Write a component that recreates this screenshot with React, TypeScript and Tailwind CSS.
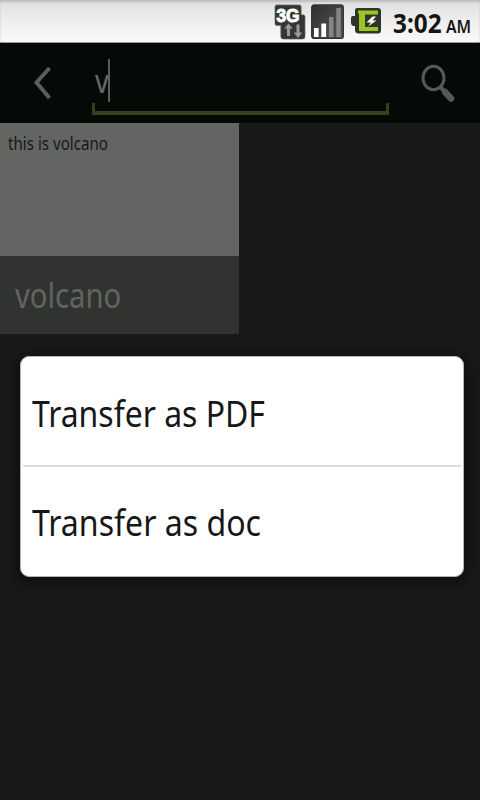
import React from "react";

function NetworkIcon() {
  return (
    <svg width="32" height="36" viewBox="0 0 32 36" className="shrink-0">
      <path d="M3 1H26Q28 1 28 3V12H30Q32 12 32 14V36Q32 39 29 39H10Q7 39 7 36V24H3Q1 24 1 22V3Q1 1 3 1Z" transform="scale(.97 .9)" fill="#353535" stroke="#707070" strokeWidth=".7" />
      <text x="2.5" y="17.5" textLength="23" lengthAdjust="spacingAndGlyphs" fontFamily="'Liberation Sans', sans-serif" fontWeight="700" fontSize="18" fill="#fff" stroke="#fff" strokeWidth="1">3G</text>
      <path d="M14.5 19.5L18.8 24.5H16V32H13V24.5H10.2ZM24 34L19.7 28.5H22.5V20.5H25.5V28.5H28.3Z" fill="#999" />
    </svg>
  );
}

function SignalIcon() {
  return (
    <svg width="33" height="36" viewBox="0 0 33 36" className="shrink-0">
      <defs>
        <linearGradient id="sig" x1="0" y1="0" x2="1" y2="1">
          <stop offset="0" stopColor="#303030" />
          <stop offset="1" stopColor="#555" />
        </linearGradient>
      </defs>
      <rect x=".7" y="1" width="31.6" height="33.4" rx="2.5" fill="url(#sig)" stroke="#333" strokeWidth="1.3" />
      <rect x="3" y="24" width="4.6" height="9" fill="#fff" />
      <rect x="10.3" y="19.5" width="4.8" height="13.5" fill="#fff" />
      <rect x="18" y="13" width="4.5" height="20" fill="#858585" />
      <rect x="25.3" y="4" width="4.5" height="29" fill="#858585" />
    </svg>
  );
}

function BatteryIcon() {
  return (
    <svg width="31" height="28" viewBox="0 0 31 28" className="shrink-0">
      <path d="M6 1H27Q30 1 30 4V23Q30 26.5 27 26.5H7Q4 26 4 23V19H2Q0 18 0 16V11Q0 9 2 9H4V4Q4 1 6 1Z" fill="#30342b" />
      <path d="M7 3.5H27V7.5H14V20H27V24H8V6.5H7Z" fill="#9cc51e" />
      <path d="M21.5 9.5L15.5 15.5H20L17 19.5L25.5 13.5H21.5L25 9.5Z" fill="#fff" />
    </svg>
  );
}

function StatusBar() {
  return (
    <div className="flex h-[43px] items-start border-b border-[#999] bg-gradient-to-b from-[#dedede] via-[#eeeeee] to-[#fafafa] pl-[274px] pt-1 shadow-[inset_0_2px_2px_#bdbdbd]">
      <NetworkIcon />
      <div className="ml-[5px]"><SignalIcon /></div>
      <div className="ml-[7px] mt-[3px]"><BatteryIcon /></div>
      <div className="ml-[11px] mt-[1px] flex h-9 w-[80px] items-baseline whitespace-nowrap text-[#151515]">
        <span className="inline-block w-[53px] origin-left scale-x-[0.9] text-[27px] font-bold leading-9">3:02</span>
        <span className="inline-block origin-left scale-x-[0.87] text-[18px] font-semibold leading-6">AM</span>
      </div>
    </div>
  );
}

function SearchHeader() {
  return (
    <div className="flex h-20 items-start bg-[#060a06]">
      <svg width="20" height="38" viewBox="0 0 20 38" className="ml-8 mt-[22px]" fill="none" stroke="#5c5e5c" strokeWidth="4">
        <path d="M17.5 3L4.5 17.5L17.5 33" />
      </svg>
      <div className="ml-10 flex h-[72px] w-[297px] flex-col justify-end">
        <div className="flex h-[45px] items-center pl-[3px]">
          <span className="inline-block w-[13px] origin-left scale-x-[0.82] text-[33px] leading-[45px] text-[#686a68]">v</span>
          <span className="h-[43px] w-[2px] bg-[#5b5d5b]" />
        </div>
        <div className="h-[12px] shrink-0 border-x-[3px] border-b-4 border-[#36411b]" />
      </div>
      <svg width="36" height="40" viewBox="0 0 36 40" className="ml-[31px] mt-[21px]" fill="none" stroke="#575957">
        <ellipse cx="13.5" cy="14" rx="10.5" ry="11.8" strokeWidth="3" />
        <path d="M20.5 23L24 27" strokeWidth="4" />
        <path d="M25 28L31 34.5" strokeWidth="6.5" strokeLinecap="round" />
      </svg>
    </div>
  );
}

function NoteCard() {
  return (
    <div className="h-[211px] w-[239px]">
      <div className="h-[133px] bg-[#636563] pl-2 pt-[8px]">
        <span className="block origin-left scale-x-[0.84] whitespace-nowrap text-[18px] leading-6 text-[#171817]">this is volcano</span>
      </div>
      <div className="h-[78px] bg-[#313331] pl-[15px] pt-[16px]">
        <span className="block origin-left scale-x-[0.86] whitespace-nowrap text-[34px] leading-[46px] text-[#626462]">volcano</span>
      </div>
    </div>
  );
}

function TransferMenu() {
  return (
    <div className="absolute left-5 top-[356px] h-[221px] w-[444px] rounded-[9px] border border-[#b5b5b5] bg-white px-[2px] text-[#171717] shadow-[0_3px_12px_5px_rgba(0,0,0,0.4)]">
      <div className="flex h-[110px] items-center border-b-2 border-[#dcdcdc] pl-[9px] pt-[4px]">
        <span className="block origin-left scale-x-[0.863] whitespace-nowrap text-[37px]">Transfer as PDF</span>
      </div>
      <div className="flex h-[109px] items-center pl-[9px] pt-[1px]">
        <span className="block origin-left scale-x-[0.867] whitespace-nowrap text-[37px]">Transfer as doc</span>
      </div>
    </div>
  );
}

export default function App() {
  return (
    <div className="relative h-[800px] w-[480px] overflow-hidden bg-[#191919] font-['Noto_Sans','Open_Sans',sans-serif]">
      <StatusBar />
      <SearchHeader />
      <NoteCard />
      <TransferMenu />
    </div>
  );
}
